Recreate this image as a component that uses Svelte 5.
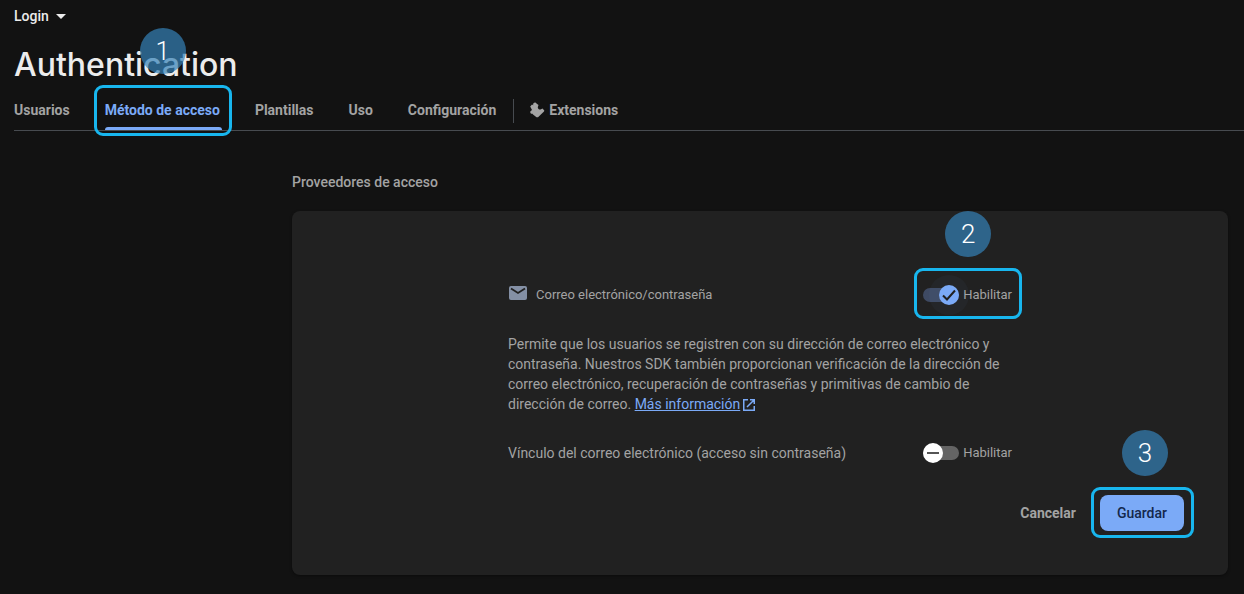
<script lang="ts">
  const tabs = ['Usuarios', 'Método de acceso', 'Plantillas', 'Uso', 'Configuración'];
  let active = $state('Método de acceso');
  let password = $state(true);
  let link = $state(false);
</script>

<div class="page">
  <header>
    <button class="project">Login
      <svg width="10" height="5" viewBox="0 0 10 5" aria-hidden="true"><path d="M0 0h10L5 5z" fill="currentColor" /></svg>
    </button>
    <h1>Authentication</h1>
    <nav>
      {#each tabs as tab}
        <a href="#{tab}" class:active={tab === active} onclick={() => (active = tab)}>
          {tab}
          {#if tab === 'Método de acceso'}
            <span class="frame tab-frame"></span><span class="badge tab-badge">1</span>
          {/if}
        </a>
      {/each}
      <span class="divider"></span>
      <a href="#Extensions" class="extensions">
        <svg width="16" height="16" viewBox="0 0 16 16" aria-hidden="true">
          <path fill="currentColor" d="M1.200 4.500 3 2.500l1.400.8A1.700 1.700 0 0 1 7.500 1.500L9.500 3 9 4.500A2.200 2.200 0 0 0 12 7.300l1.500-.8L15.300 8.500 15 9.500 9 15.300H7.500L4 12.500 3.500 11.700A1.700 1.700 0 0 1 1.500 9.200L3 8z" />
        </svg>
        Extensions
      </a>
    </nav>
  </header>

  <main>
    <h2>Proveedores de acceso</h2>
    <section class="card">
      <form onsubmit={(e) => e.preventDefault()}>
        <div class="fields">
          <div class="row">
            <span class="provider">
              <svg width="20" height="20" viewBox="0 0 20 20" aria-hidden="true">
                <rect x="1" y="1" width="18" height="14" rx="2" fill="#8490a5" />
                <path d="M3 3.500 10 8l7-4.500" fill="none" stroke="#212121" stroke-width="1.800" />
              </svg>
              Correo electrónico/contraseña
            </span>
            <label class="toggle">
              <span class="switch">
                <input type="checkbox" bind:checked={password} />
                <span class="thumb">
                  <svg width="20" height="20" viewBox="0 0 20 20" aria-hidden="true">
                    <path d={password ? 'M4 10.500l4 4 8-9' : 'M4 10h12'} />
                  </svg>
                </span>
              </span>
              Habilitar
              <span class="frame toggle-frame"></span><span class="badge toggle-badge">2</span>
            </label>
          </div>
          <p>
            Permite que los usuarios se registren con su dirección de correo electrónico y contraseña. Nuestros SDK también proporcionan verificación de la dirección de correo electrónico, recuperación de contraseñas y primitivas de cambio de dirección de correo.
            <a href="#info">Más información<svg width="14" height="14" viewBox="0 0 14 14" aria-hidden="true"><path d="M6 1.750H1.750v10.500h10.500V8M8 1.750h4.250V6M12.250 1.750 5 9" fill="none" stroke="currentColor" stroke-width="1.500" /></svg></a>
          </p>
          <div class="row link-row">
            <span>Vínculo del correo electrónico (acceso sin contraseña)</span>
            <label class="toggle">
              <span class="switch">
                <input type="checkbox" bind:checked={link} />
                <span class="thumb">
                  <svg width="20" height="20" viewBox="0 0 20 20" aria-hidden="true">
                    <path d={link ? 'M4 10.500l4 4 8-9' : 'M4 10h12'} />
                  </svg>
                </span>
              </span>
              Habilitar
            </label>
          </div>
        </div>
        <div class="actions">
          <button type="button" class="cancel">Cancelar</button>
          <div class="save-wrap">
            <button type="submit" class="save">Guardar</button>
            <span class="frame save-frame"></span><span class="badge save-badge">3</span>
          </div>
        </div>
      </form>
    </section>
  </main>
</div>

<style>
  :global(body) { background: #121212; }
  .page { min-height: 100vh; box-sizing: border-box; color: #a3a3a3; font: 14px/20px Roboto, sans-serif; }
  button { border: 0; padding: 0; background: none; color: inherit; font: inherit; cursor: pointer; }
  header { padding: 6px 0 0 14px; }
  .project { display: flex; align-items: center; gap: 7px; color: #ececec; font-weight: 500; }
  h1 { margin: 19px 0 0; color: #ececec; font: 500 32px/40px Inter, sans-serif; }
  nav { display: flex; align-items: flex-end; height: 45px; border-bottom: 1px solid #474b50; }
  nav a { position: relative; display: flex; align-items: center; height: 40px; margin-right: 35px; color: inherit; font-weight: 700; text-decoration: none; white-space: nowrap; }
  nav .active { color: #7baaf7; }
  nav .active::after { content: ''; position: absolute; left: 0; right: -2px; bottom: 0; height: 3px; border-radius: 3px 3px 0 0; background: #7baaf7; }
  .divider { width: 1px; height: 24px; margin: 0 15px 7px -18px; background: #474b50; }
  .extensions { gap: 4px; }
  main { padding: 41px 16px 0 292px; }
  h2 { margin: 0 0 19px; font: 500 14px/20px Roboto, sans-serif; }
  .card { padding: 72px 44px 44px; border-radius: 8px; background: #212121; box-shadow: 0 1px 3px #0006; }
  .fields { max-width: 504px; margin: 0 auto; }
  .row { display: flex; align-items: center; justify-content: space-between; height: 24px; }
  .provider { display: flex; align-items: center; gap: 8px; font-size: 13px; }
  p { margin: 27px 0 26px; }
  p a { color: #7baaf7; text-decoration: underline; white-space: nowrap; }
  p svg { margin-left: 2px; vertical-align: -3px; }
  .toggle { position: relative; display: flex; align-items: center; gap: 4px; font-size: 13px; cursor: pointer; }
  .link-row { height: 26px; }
  .switch { position: relative; display: flex; }
  input { appearance: none; width: 36px; height: 14px; margin: 0; border-radius: 7px; background: #646464; cursor: pointer; }
  input:checked { background: #3e4a63; }
  .thumb { position: absolute; top: -3px; left: 0; width: 20px; height: 20px; border-radius: 50%; background: #fff; pointer-events: none; }
  input:checked + .thumb { left: 16px; background: #7baaf7; box-shadow: 0 0 0 10px #7baaf70a; }
  .thumb svg { display: block; fill: none; stroke: #555; stroke-width: 2; }
  input:checked + .thumb svg { stroke: #212121; }
  .actions { display: flex; align-items: center; justify-content: flex-end; gap: 24px; margin-top: 29px; }
  .cancel { font-weight: 700; }
  .save-wrap { position: relative; }
  .save { height: 36px; padding: 0 17px; border-radius: 8px; background: #7baaf7; color: #13284c; font-weight: 500; }
  .frame { position: absolute; border: 3px solid #18b6ee; border-radius: 9px; pointer-events: none; }
  .tab-frame { inset: -5px -12px -6px -11px; }
  .toggle-frame { inset: -17px -10px -14px -9px; }
  .save-frame { inset: -8px -10px -7px -9px; }
  .badge { position: absolute; width: 46px; height: 46px; border-radius: 50%; background: rgb(52 129 184 / 70%); color: #fff; font: 300 26px/46px Roboto, sans-serif; text-align: center; pointer-events: none; }
  .tab-badge { left: 35px; top: -62px; }
  .toggle-badge { left: 22px; top: -74px; }
  .save-badge { left: 22px; top: -65px; }
</style>
